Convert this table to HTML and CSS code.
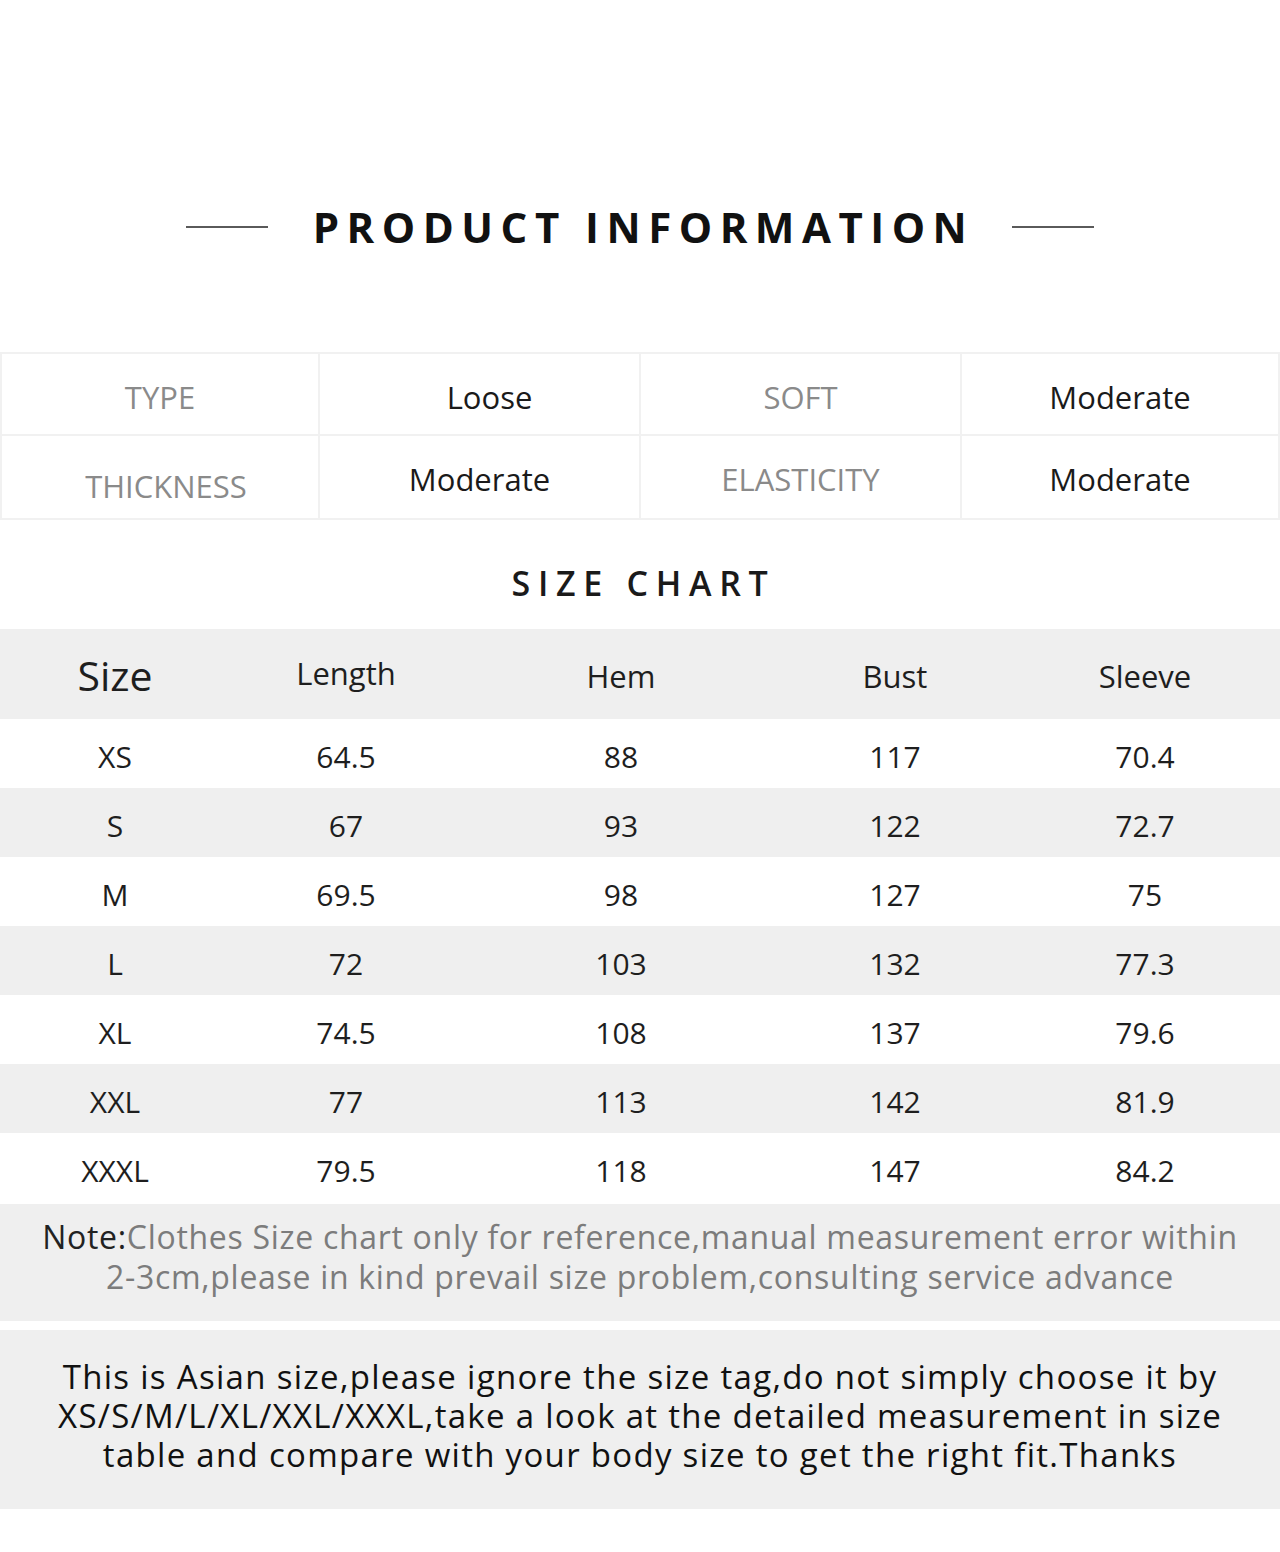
FILE: index.html
```html
<!DOCTYPE html>
<html lang="en">
<head>
<meta charset="utf-8">
<title>Product Information</title>
<link rel="stylesheet" href="styles.css">
</head>
<body>
<div class="page">
  <header class="hero">
    <span class="rule"></span>
    <h1 class="hero-title">PRODUCT INFORMATION</h1>
    <span class="rule"></span>
  </header>

  <section class="info">
    <div class="info-cell top label">TYPE</div>
    <div class="info-cell top value shift">Loose</div>
    <div class="info-cell top label">SOFT</div>
    <div class="info-cell top value">Moderate</div>
    <div class="info-cell label low">THICKNESS</div>
    <div class="info-cell value">Moderate</div>
    <div class="info-cell label">ELASTICITY</div>
    <div class="info-cell value">Moderate</div>
  </section>

  <h2 class="chart-title">SIZE CHART</h2>

  <section class="chart">
    <div class="chart-row head">
      <div class="c size-head">Size</div>
      <div class="c up">Length</div>
      <div class="c">Hem</div>
      <div class="c">Bust</div>
      <div class="c">Sleeve</div>
    </div>
    <div class="chart-row"><div class="c">XS</div><div class="c">64.5</div><div class="c">88</div><div class="c">117</div><div class="c">70.4</div></div>
    <div class="chart-row alt"><div class="c">S</div><div class="c">67</div><div class="c">93</div><div class="c">122</div><div class="c">72.7</div></div>
    <div class="chart-row"><div class="c">M</div><div class="c">69.5</div><div class="c">98</div><div class="c">127</div><div class="c">75</div></div>
    <div class="chart-row alt"><div class="c">L</div><div class="c">72</div><div class="c">103</div><div class="c">132</div><div class="c">77.3</div></div>
    <div class="chart-row"><div class="c">XL</div><div class="c">74.5</div><div class="c">108</div><div class="c">137</div><div class="c">79.6</div></div>
    <div class="chart-row alt"><div class="c">XXL</div><div class="c">77</div><div class="c">113</div><div class="c">142</div><div class="c">81.9</div></div>
    <div class="chart-row"><div class="c">XXXL</div><div class="c">79.5</div><div class="c">118</div><div class="c">147</div><div class="c">84.2</div></div>
  </section>

  <p class="note"><span class="note-key">Note:</span>Clothes Size chart only for reference,manual measurement error within<br>2-3cm,please in kind prevail size problem,consulting service advance</p>

  <p class="asian">This is Asian size,please ignore the size tag,do not simply choose it by<br>XS/S/M/L/XL/XXL/XXXL,take a look at the detailed measurement in size<br>table and compare with your body size to get the right fit.Thanks</p>
</div>
</body>
</html>
```

FILE: styles.css
```css
* { box-sizing: border-box; }

html, body {
  margin: 0;
  padding: 0;
  background: #ffffff;
}

body {
  font-family: "Open Sans", "Noto Sans", "DejaVu Sans", sans-serif;
  color: #222;
}

.page {
  width: 1280px;
  min-height: 1552px;
  background: #fff;
}

/* ---------- hero title ---------- */
.hero {
  display: flex;
  align-items: center;
  justify-content: center;
  gap: 45px;
  padding: 200px 0 98px;
}

.rule {
  display: block;
  width: 82px;
  height: 2px;
  background: #5a5a5a;
}

.hero-title {
  margin: 0 -7px 0 0;
  font-family: "Open Sans", "Liberation Sans", sans-serif;
  font-weight: 700;
  font-size: 42px;
  line-height: 54px;
  letter-spacing: 7.5px;
  color: #111;
}

/* ---------- info grid ---------- */
.info {
  display: grid;
  grid-template-columns: 320px 321px 321px 318px;
  grid-template-rows: 82px 82px;
  border-top: 2px solid #f1f1f1;
  border-bottom: 2px solid #f1f1f1;
}

.info-cell {
  display: flex;
  align-items: center;
  justify-content: center;
  font-size: 31px;
  border-right: 2px solid #f1f1f1;
  padding-top: 4px;
}

.info-cell.top {
  border-bottom: 2px solid #f1f1f1;
  padding-top: 6px;
}

.info-cell:nth-child(4n+1) {
  border-left: 2px solid #f1f1f1;
}

.label {
  color: #8a8a8a;
  font-weight: 400;
}

.value {
  color: #1a1a1a;
}

.shift { padding-left: 20px; }
.info-cell.low { padding-top: 18px; padding-left: 12px; }

/* ---------- size chart ---------- */
.chart-title {
  margin: 0;
  padding: 43px 0 26px;
  text-align: center;
  font-size: 34px;
  line-height: 40px;
  font-weight: 600;
  letter-spacing: 7.7px;
  color: #1a1a1a;
  margin-right: -7px;
}

.chart-row {
  display: grid;
  grid-template-columns: 230px 232px 318px 230px 270px;
  height: 69px;
  background: #fff;
}

.chart-row.alt {
  background: #efefef;
}

.chart-row.head {
  height: 90px;
  background: #efefef;
}

.c {
  display: flex;
  align-items: center;
  justify-content: center;
  font-size: 30px;
  color: #1e1e1e;
  padding-top: 6px;
}

.head .c {
  padding-top: 4px;
  font-size: 31px;
}

.head .size-head {
  font-size: 41px;
  padding-top: 2px;
}

.head .up {
  padding-top: 0;
  padding-bottom: 2px;
}

/* ---------- notes ---------- */
.note {
  margin: 2px 0 0;
  background: #efefef;
  padding: 13px 0 24px;
  text-align: center;
  font-size: 32px;
  line-height: 40px;
  color: #7c7c7c;
  letter-spacing: 0.7px;
}

.note-key {
  color: #222;
}

.asian {
  margin: 9px 0 0;
  background: #efefef;
  padding: 27px 0 35px;
  text-align: center;
  font-size: 33px;
  line-height: 39px;
  color: #111;
  letter-spacing: 1.3px;
}
```
